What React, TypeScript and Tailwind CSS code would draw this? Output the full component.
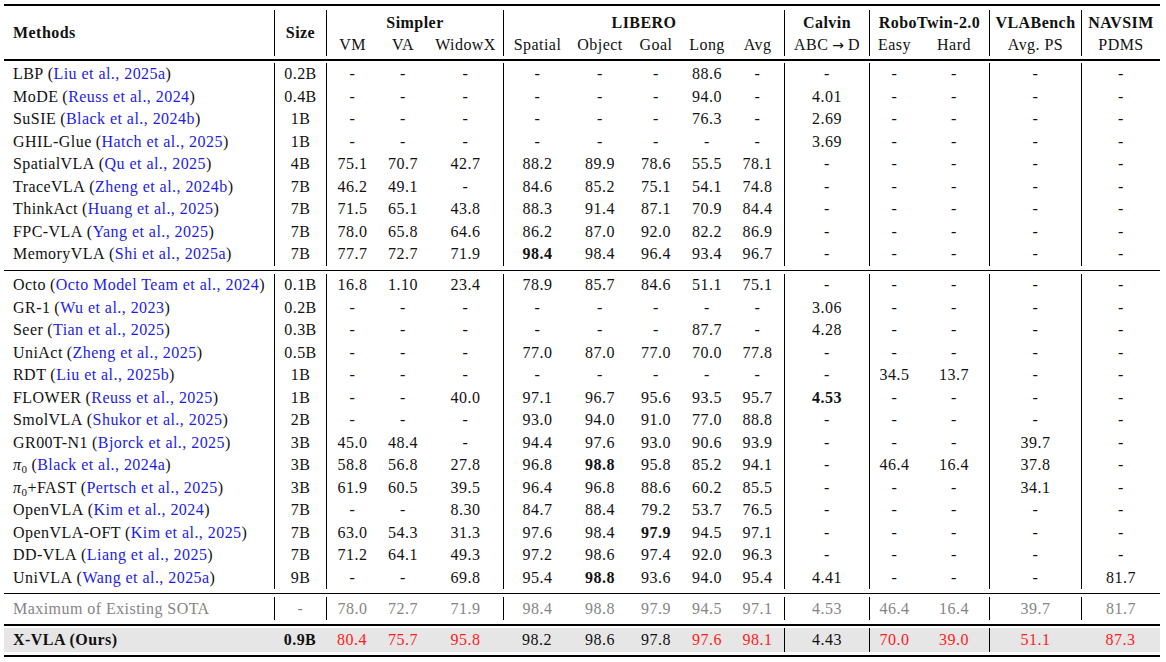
import React from "react";

type Cell = { v: string; b?: boolean; c?: "r" | "g" };

const GRID =
  "grid grid-cols-[270px_52px_52px_50px_75px_68px_58px_54px_48px_53px_85px_50px_70px_92px_79px]";

const BORDER_IDX = new Set([1, 2, 5, 10, 11, 13, 14]);
const OURS_BORDER_IDX = new Set([10, 11, 13]);

type RowData = {
  name: React.ReactNode;
  cite?: string;
  vals: (string | Cell)[];
};

const d = "-";

const group1: RowData[] = [
  { name: "LBP", cite: "Liu et al., 2025a", vals: ["0.2B", d, d, d, d, d, d, "88.6", d, d, d, d, d, d] },
  { name: "MoDE", cite: "Reuss et al., 2024", vals: ["0.4B", d, d, d, d, d, d, "94.0", d, "4.01", d, d, d, d] },
  { name: "SuSIE", cite: "Black et al., 2024b", vals: ["1B", d, d, d, d, d, d, "76.3", d, "2.69", d, d, d, d] },
  { name: "GHIL-Glue", cite: "Hatch et al., 2025", vals: ["1B", d, d, d, d, d, d, d, d, "3.69", d, d, d, d] },
  { name: "SpatialVLA", cite: "Qu et al., 2025", vals: ["4B", "75.1", "70.7", "42.7", "88.2", "89.9", "78.6", "55.5", "78.1", d, d, d, d, d] },
  { name: "TraceVLA", cite: "Zheng et al., 2024b", vals: ["7B", "46.2", "49.1", d, "84.6", "85.2", "75.1", "54.1", "74.8", d, d, d, d, d] },
  { name: "ThinkAct", cite: "Huang et al., 2025", vals: ["7B", "71.5", "65.1", "43.8", "88.3", "91.4", "87.1", "70.9", "84.4", d, d, d, d, d] },
  { name: "FPC-VLA", cite: "Yang et al., 2025", vals: ["7B", "78.0", "65.8", "64.6", "86.2", "87.0", "92.0", "82.2", "86.9", d, d, d, d, d] },
  { name: "MemoryVLA", cite: "Shi et al., 2025a", vals: ["7B", "77.7", "72.7", "71.9", { v: "98.4", b: true }, "98.4", "96.4", "93.4", "96.7", d, d, d, d, d] },
];

const Pi = () => (
  <span>
    <i>π</i>
    <span className="text-[11px] relative top-[3px]">0</span>
  </span>
);

const group2: RowData[] = [
  { name: "Octo", cite: "Octo Model Team et al., 2024", vals: ["0.1B", "16.8", "1.10", "23.4", "78.9", "85.7", "84.6", "51.1", "75.1", d, d, d, d, d] },
  { name: "GR-1", cite: "Wu et al., 2023", vals: ["0.2B", d, d, d, d, d, d, d, d, "3.06", d, d, d, d] },
  { name: "Seer", cite: "Tian et al., 2025", vals: ["0.3B", d, d, d, d, d, d, "87.7", d, "4.28", d, d, d, d] },
  { name: "UniAct", cite: "Zheng et al., 2025", vals: ["0.5B", d, d, d, "77.0", "87.0", "77.0", "70.0", "77.8", d, d, d, d, d] },
  { name: "RDT", cite: "Liu et al., 2025b", vals: ["1B", d, d, d, d, d, d, d, d, d, "34.5", "13.7", d, d] },
  { name: "FLOWER", cite: "Reuss et al., 2025", vals: ["1B", d, d, "40.0", "97.1", "96.7", "95.6", "93.5", "95.7", { v: "4.53", b: true }, d, d, d, d] },
  { name: "SmolVLA", cite: "Shukor et al., 2025", vals: ["2B", d, d, d, "93.0", "94.0", "91.0", "77.0", "88.8", d, d, d, d, d] },
  { name: "GR00T-N1", cite: "Bjorck et al., 2025", vals: ["3B", "45.0", "48.4", d, "94.4", "97.6", "93.0", "90.6", "93.9", d, d, d, "39.7", d] },
  { name: <Pi />, cite: "Black et al., 2024a", vals: ["3B", "58.8", "56.8", "27.8", "96.8", { v: "98.8", b: true }, "95.8", "85.2", "94.1", d, "46.4", "16.4", "37.8", d] },
  { name: <><Pi />+FAST</>, cite: "Pertsch et al., 2025", vals: ["3B", "61.9", "60.5", "39.5", "96.4", "96.8", "88.6", "60.2", "85.5", d, d, d, "34.1", d] },
  { name: "OpenVLA", cite: "Kim et al., 2024", vals: ["7B", d, d, "8.30", "84.7", "88.4", "79.2", "53.7", "76.5", d, d, d, d, d] },
  { name: "OpenVLA-OFT", cite: "Kim et al., 2025", vals: ["7B", "63.0", "54.3", "31.3", "97.6", "98.4", { v: "97.9", b: true }, "94.5", "97.1", d, d, d, d, d] },
  { name: "DD-VLA", cite: "Liang et al., 2025", vals: ["7B", "71.2", "64.1", "49.3", "97.2", "98.6", "97.4", "92.0", "96.3", d, d, d, d, d] },
  { name: "UniVLA", cite: "Wang et al., 2025a", vals: ["9B", d, d, "69.8", "95.4", { v: "98.8", b: true }, "93.6", "94.0", "95.4", "4.41", d, d, d, "81.7"] },
];

const maxRow = ["-", "78.0", "72.7", "71.9", "98.4", "98.8", "97.9", "94.5", "97.1", "4.53", "46.4", "16.4", "39.7", "81.7"];
const R = (v: string): Cell => ({ v, c: "r" });
const oursRow: Cell[] = [
  { v: "0.9B", b: true },
  R("80.4"), R("75.7"), R("95.8"),
  { v: "98.2" }, { v: "98.6" }, { v: "97.8" }, R("97.6"), R("98.1"),
  { v: "4.43" },
  R("70.0"), R("39.0"), R("51.1"), R("87.3"),
];

function ValueCell({ cell, border }: { cell: Cell; border: boolean }) {
  const color =
    cell.c === "r" ? "text-[#ff1a1a]" : cell.c === "g" ? "text-[#858585]" : "";
  return (
    <div
      className={`flex items-center justify-center ${border ? "border-l border-black" : ""} ${cell.b ? "font-bold" : ""} ${color}`}
    >
      {cell.v}
    </div>
  );
}

function DataRow({ r }: { r: RowData }) {
  return (
    <div className={`${GRID} h-[22.5px]`}>
      <div className="flex items-center pl-[9px] whitespace-nowrap">
        <span>{r.name}</span>
        {r.cite && (
          <span className="ml-[4px]">
            (<span className="text-[#1c1ce6]">{r.cite}</span>)
          </span>
        )}
      </div>
      {r.vals.map((v, i) => (
        <ValueCell key={i} border={BORDER_IDX.has(i + 1)} cell={typeof v === "string" ? { v } : v} />
      ))}
    </div>
  );
}

function Rule({ thick }: { thick?: boolean }) {
  return <div className={`${thick ? "h-[2px]" : "h-[1.5px]"} bg-black`} />;
}

export default function App() {
  return (
    <div className="w-[1166px] h-[662px] bg-white text-[#111] font-['Liberation_Serif',serif] text-[16px] tracking-[0.45px] leading-none">
      <div className="ml-[4px] w-[1156px] pt-[4px]">
        <Rule thick />
        <div className="h-[4px]" />
        {/* Header */}
        <div className={`${GRID} grid-rows-[23px_23px] h-[46px]`}>
          <div className="row-span-2 flex items-center pl-[9px] font-bold">Methods</div>
          <div className="row-span-2 flex items-center justify-center font-bold border-l border-black">Size</div>
          <div className="col-span-3 flex items-center justify-center font-bold border-l border-black pt-[2px]">Simpler</div>
          <div className="col-span-5 flex items-center justify-center font-bold border-l border-black pt-[2px]">LIBERO</div>
          <div className="flex items-center justify-center font-bold border-l border-black pt-[2px]">Calvin</div>
          <div className="col-span-2 flex items-center justify-center font-bold border-l border-black pt-[2px]">RoboTwin-2.0</div>
          <div className="flex items-center justify-center font-bold border-l border-black pt-[2px]">VLABench</div>
          <div className="flex items-center justify-center font-bold border-l border-black pt-[2px]">NAVSIM</div>
          <div className="flex items-center justify-center border-l border-black">VM</div>
          <div className="flex items-center justify-center">VA</div>
          <div className="flex items-center justify-center">WidowX</div>
          <div className="flex items-center justify-center border-l border-black">Spatial</div>
          <div className="flex items-center justify-center">Object</div>
          <div className="flex items-center justify-center">Goal</div>
          <div className="flex items-center justify-center">Long</div>
          <div className="flex items-center justify-center">Avg</div>
          <div className="flex items-center justify-center border-l border-black">
            ABC
            <span className="mx-[4px] font-['DejaVu_Sans',sans-serif] text-[14px] tracking-normal leading-none">→</span>
            D
          </div>
          <div className="flex items-center justify-center border-l border-black">Easy</div>
          <div className="flex items-center justify-center">Hard</div>
          <div className="flex items-center justify-center border-l border-black">Avg. PS</div>
          <div className="flex items-center justify-center border-l border-black">PDMS</div>
        </div>
        <div className="h-[3px]" />
        <Rule />
        <div className="h-[2.5px]" />
        {group1.map((r, i) => (
          <DataRow key={i} r={r} />
        ))}
        <div className="h-[4px]" />
        <Rule />
        <div className="h-[3px]" />
        {group2.map((r, i) => (
          <DataRow key={i} r={r} />
        ))}
        <div className="h-[3.5px]" />
        <Rule />
        <div className="h-[3px]" />
        <div className={`${GRID} h-[23px] text-[#858585]`}>
          <div className="flex items-center pl-[9px] whitespace-nowrap">Maximum of Existing SOTA</div>
          {maxRow.map((v, i) => (
            <ValueCell key={i} border={BORDER_IDX.has(i + 1)} cell={{ v, c: "g" }} />
          ))}
        </div>
        <div className="h-[4px]" />
        <Rule />
        <div className="h-[2.5px]" />
        <div className={`${GRID} h-[24px] bg-[#e6e6e6]`}>
          <div className="flex items-center pl-[9px] whitespace-nowrap font-bold">X-VLA (Ours)</div>
          {oursRow.map((c, i) => (
            <ValueCell key={i} border={OURS_BORDER_IDX.has(i + 1)} cell={c} />
          ))}
        </div>
        <div className="h-[3px]" />
        <Rule thick />
      </div>
    </div>
  );
}
